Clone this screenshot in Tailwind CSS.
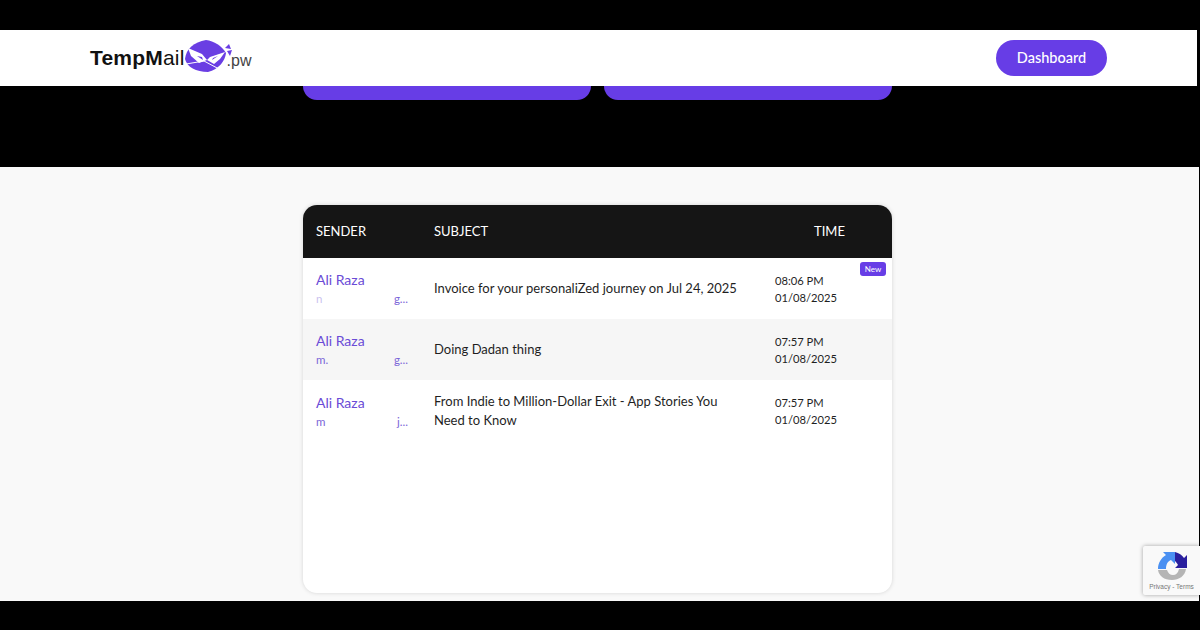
<!DOCTYPE html>
<html lang="en">
<head>
	<meta charset="UTF-8">
	<title>TempMail.pw</title>
	<script src="https://cdn.jsdelivr.net/npm/@tailwindcss/browser@4"></script>
</head>
<body class="bg-black h-[630px] overflow-hidden pt-[30px] font-['Lato',sans-serif]">
	<!-- header -->
	<header class="bg-white h-[56px] mr-[3px] flex items-center justify-between pl-[90px] pr-[90px]">
		<div class="flex items-center">
			<span class="font-['Liberation_Sans',sans-serif] text-[21px] font-bold text-[#111] tracking-[0.2px]">TempM<span class="font-normal">ail</span></span>
			<svg class="w-[50px] h-[36px] -ml-[1px] -mt-[2px]" viewBox="0 0 50 36">
				<path d="M1 20C2 10 10 3 22 1c8 1 16 6 20 13-1 8-7 16-18 19C12 33 3 28 1 20z" fill="#6a3ee3"/>
				<path d="M4 9l14 6 5 6-8 3-8-7zM41 13l-15 5-3 3 7 4 6-5z" fill="#fff"/>
				<path d="M13 17l5 1 1 3zM34 17l-5 2-1 2z" fill="#6a3ee3"/>
				<path d="M2 25l18-3 15 8" fill="none" stroke="#fff" stroke-width="1"/>
				<path d="M41 9l4-4 2 5zM43 12l5-1-2 6z" fill="#6a3ee3"/>
			</svg>
			<span class="font-['Liberation_Sans',sans-serif] text-[16px] text-[#444] -ml-[7px] mt-[5px]">.pw</span>
		</div>
		<a class="w-[111px] h-[36px] rounded-full bg-[#673de6] text-white text-[14.5px] font-medium flex items-center justify-center">Dashboard</a>
	</header>

	<section class="h-[81px] flex justify-center gap-[13px] pr-[5px]">
		<div class="w-[288px] h-[14px] bg-[#673de6] rounded-b-[14px]"></div>
		<div class="w-[288px] h-[14px] bg-[#673de6] rounded-b-[14px]"></div>
	</section>

	<!-- inbox -->
	<main class="bg-[#f9f9f9] h-[434px] pt-[38px] mr-[1px]">
		<div class="relative w-[589px] h-[388px] ml-[303px] bg-white rounded-[14px] shadow-[0_0_4px_rgba(0,0,0,0.15)] overflow-hidden text-[13px] text-[#1f1f1f]">
			<div class="h-[53px] bg-[#151515] text-white flex items-center uppercase">
				<div class="w-[131px] pl-[13px]">Sender</div>
				<div class="w-[380px]">Subject</div>
				<div>Time</div>
			</div>

			<div class="relative h-[61px] flex items-center">
				<div class="w-[131px] pl-[13px]">
					<p class="text-[14px] text-[#6a4bd6] leading-[20px]">Ali Raza</p>
					<p class="text-[11.5px] text-[#7b66d8] leading-[16px] mt-[1px] flex justify-between w-[92px]"><span class="opacity-40">n</span><span>g...</span></p>
				</div>
				<div class="w-[341px]">Invoice for your personaliZed journey on Jul 24, 2025</div>
				<div class="text-[11.2px] leading-[17px]">08:06 PM<br>01/08/2025</div>
				<span class="absolute top-[4px] right-[6px] w-[26px] h-[14px] rounded-[3px] bg-[#673de6] text-white text-[8px] flex items-center justify-center">New</span>
			</div>

			<div class="h-[61px] flex items-center bg-[#f6f6f6]">
				<div class="w-[131px] pl-[13px]">
					<p class="text-[14px] text-[#6a4bd6] leading-[20px]">Ali Raza</p>
					<p class="text-[11.5px] text-[#7b66d8] leading-[16px] mt-[1px] flex justify-between w-[92px]"><span>m.</span><span>g...</span></p>
				</div>
				<div class="w-[341px]">Doing Dadan thing</div>
				<div class="text-[11.2px] leading-[17px]">07:57 PM<br>01/08/2025</div>
			</div>

			<div class="h-[62px] flex items-center">
				<div class="w-[131px] pl-[13px]">
					<p class="text-[14px] text-[#6a4bd6] leading-[20px]">Ali Raza</p>
					<p class="text-[11.5px] text-[#7b66d8] leading-[16px] mt-[1px] flex justify-between w-[92px]"><span>m</span><span>j...</span></p>
				</div>
				<div class="w-[341px] pr-[30px] leading-[19px]">From Indie to Million-Dollar Exit - App Stories You Need to Know</div>
				<div class="text-[11.2px] leading-[17px]">07:57 PM<br>01/08/2025</div>
			</div>
		</div>
	</main>

	<!-- recaptcha badge -->
	<div class="absolute left-[1143px] top-[546px] w-[57px] h-[49px] bg-[#f9f9f9] rounded-l-[2px] shadow-[0_0_4px_rgba(0,0,0,0.35)] flex flex-col items-center pt-[5px]">
		<svg class="w-[30px] h-[30px]" viewBox="0 0 30 30">
			<path d="M1 18C1 12 4 7 9 4L6 1h12v12l-4-4c-3 1-5 4-5 9z" fill="#4a90f2"/>
			<path d="M18 1c4 1 7 3 9 6l3-3v13H18l3-3c-1-2-2-3-3-4z" fill="#2a1f9e"/>
			<path d="M1 19h9c1 3 3 5 6 5s5-2 6-6h7c-1 7-7 11-14 11C7 29 2 25 1 19z" fill="#b5b5b5"/>
		</svg>
		<p class="text-[6.5px] text-[#777] mt-[1px] font-['Liberation_Sans',sans-serif]">Privacy - Terms</p>
	</div>
</body>
</html>
